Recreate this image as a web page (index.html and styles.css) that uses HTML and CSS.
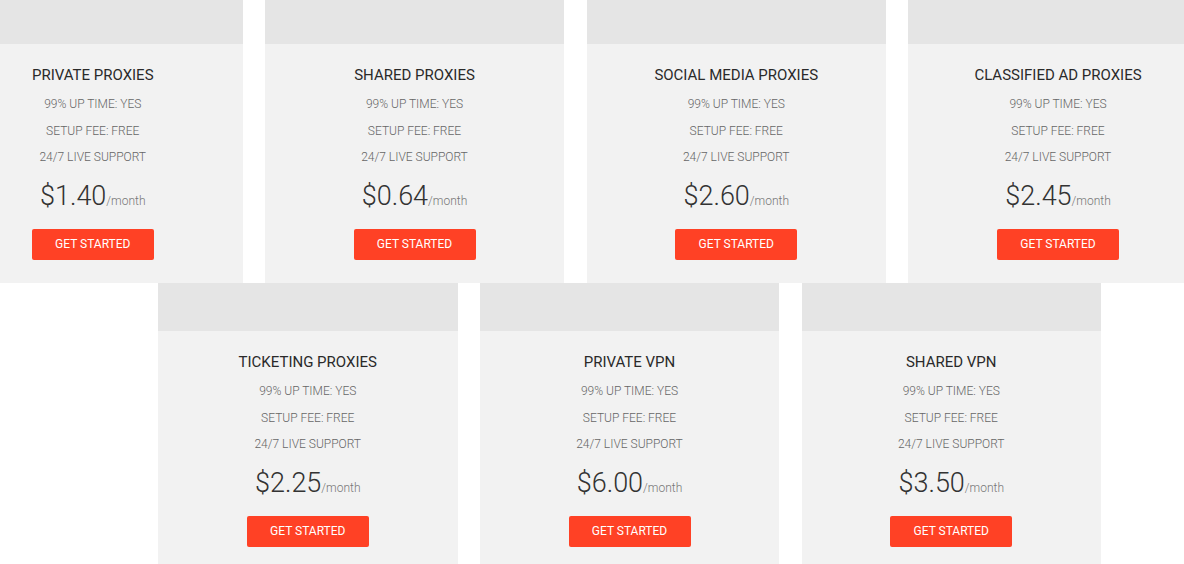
FILE: index.html
```html
<!DOCTYPE html>
<html>
<head>
<meta charset="utf-8">
<title>Pricing</title>
<link rel="stylesheet" href="styles.css">
</head>
<body>
	<div class="pricing">
		<div class="row row-top">
			<div class="plan">
				<div class="plan-head"></div>
				<div class="plan-body">
					<h3>PRIVATE PROXIES</h3>
					<ul>
						<li>99% UP TIME: YES</li>
						<li>SETUP FEE: FREE</li>
						<li>24/7 LIVE SUPPORT</li>
					</ul>
					<div class="price">$1.40<span>/month</span></div>
					<a href="#" class="btn">GET STARTED</a>
				</div>
			</div>
			<div class="plan">
				<div class="plan-head"></div>
				<div class="plan-body">
					<h3>SHARED PROXIES</h3>
					<ul>
						<li>99% UP TIME: YES</li>
						<li>SETUP FEE: FREE</li>
						<li>24/7 LIVE SUPPORT</li>
					</ul>
					<div class="price">$0.64<span>/month</span></div>
					<a href="#" class="btn">GET STARTED</a>
				</div>
			</div>
			<div class="plan">
				<div class="plan-head"></div>
				<div class="plan-body">
					<h3>SOCIAL MEDIA PROXIES</h3>
					<ul>
						<li>99% UP TIME: YES</li>
						<li>SETUP FEE: FREE</li>
						<li>24/7 LIVE SUPPORT</li>
					</ul>
					<div class="price">$2.60<span>/month</span></div>
					<a href="#" class="btn">GET STARTED</a>
				</div>
			</div>
			<div class="plan">
				<div class="plan-head"></div>
				<div class="plan-body">
					<h3>CLASSIFIED AD PROXIES</h3>
					<ul>
						<li>99% UP TIME: YES</li>
						<li>SETUP FEE: FREE</li>
						<li>24/7 LIVE SUPPORT</li>
					</ul>
					<div class="price">$2.45<span>/month</span></div>
					<a href="#" class="btn">GET STARTED</a>
				</div>
			</div>
		</div>
		<div class="row row-bottom">
			<div class="plan">
				<div class="plan-head"></div>
				<div class="plan-body">
					<h3>TICKETING PROXIES</h3>
					<ul>
						<li>99% UP TIME: YES</li>
						<li>SETUP FEE: FREE</li>
						<li>24/7 LIVE SUPPORT</li>
					</ul>
					<div class="price">$2.25<span>/month</span></div>
					<a href="#" class="btn">GET STARTED</a>
				</div>
			</div>
			<div class="plan">
				<div class="plan-head"></div>
				<div class="plan-body">
					<h3>PRIVATE VPN</h3>
					<ul>
						<li>99% UP TIME: YES</li>
						<li>SETUP FEE: FREE</li>
						<li>24/7 LIVE SUPPORT</li>
					</ul>
					<div class="price">$6.00<span>/month</span></div>
					<a href="#" class="btn">GET STARTED</a>
				</div>
			</div>
			<div class="plan">
				<div class="plan-head"></div>
				<div class="plan-body">
					<h3>SHARED VPN</h3>
					<ul>
						<li>99% UP TIME: YES</li>
						<li>SETUP FEE: FREE</li>
						<li>24/7 LIVE SUPPORT</li>
					</ul>
					<div class="price">$3.50<span>/month</span></div>
					<a href="#" class="btn">GET STARTED</a>
				</div>
			</div>
		</div>
	</div>
</body>
</html>
```
FILE: styles.css
```css
* {
	margin: 0;
	padding: 0;
	box-sizing: border-box;
}

body {
	background: #fff;
	font-family: Roboto, "Liberation Sans", sans-serif;
	overflow: hidden;
}

/**** pricing table ****/
.pricing {
	margin-top: -4px;
}

.row {
	display: flex;
	gap: 22.25px;
}

.row-top {
	margin-left: -57px;
}

.row-bottom {
	margin-left: 158px;
}

.plan {
	flex: none;
	width: 299.5px;
}

.plan-head {
	height: 48px;
	background: #e5e5e5;
}

.plan-body {
	height: 239px;
	background: #f2f2f2;
	text-align: center;
	padding-top: 22px;
}

.plan-body h3 {
	font-size: 15px;
	font-weight: 400;
	color: #2a2a2a;
	line-height: 18px;
}

.plan-body ul {
	list-style: none;
	margin-top: 7px;
}

.plan-body li {
	font-size: 12px;
	font-weight: 300;
	color: #666;
	line-height: 26.5px;
}

.price {
	font-size: 27px;
	font-weight: 300;
	color: #333;
	line-height: 32px;
	margin-top: 9px;
}

.price span {
	font-size: 12px;
	color: #777;
}

.btn {
	display: block;
	width: 122px;
	height: 31px;
	margin: 12px auto 0;
	background: #ff4125;
	border-radius: 2px;
	color: #fff;
	font-size: 12px;
	line-height: 30px;
	text-decoration: none;
}
```
